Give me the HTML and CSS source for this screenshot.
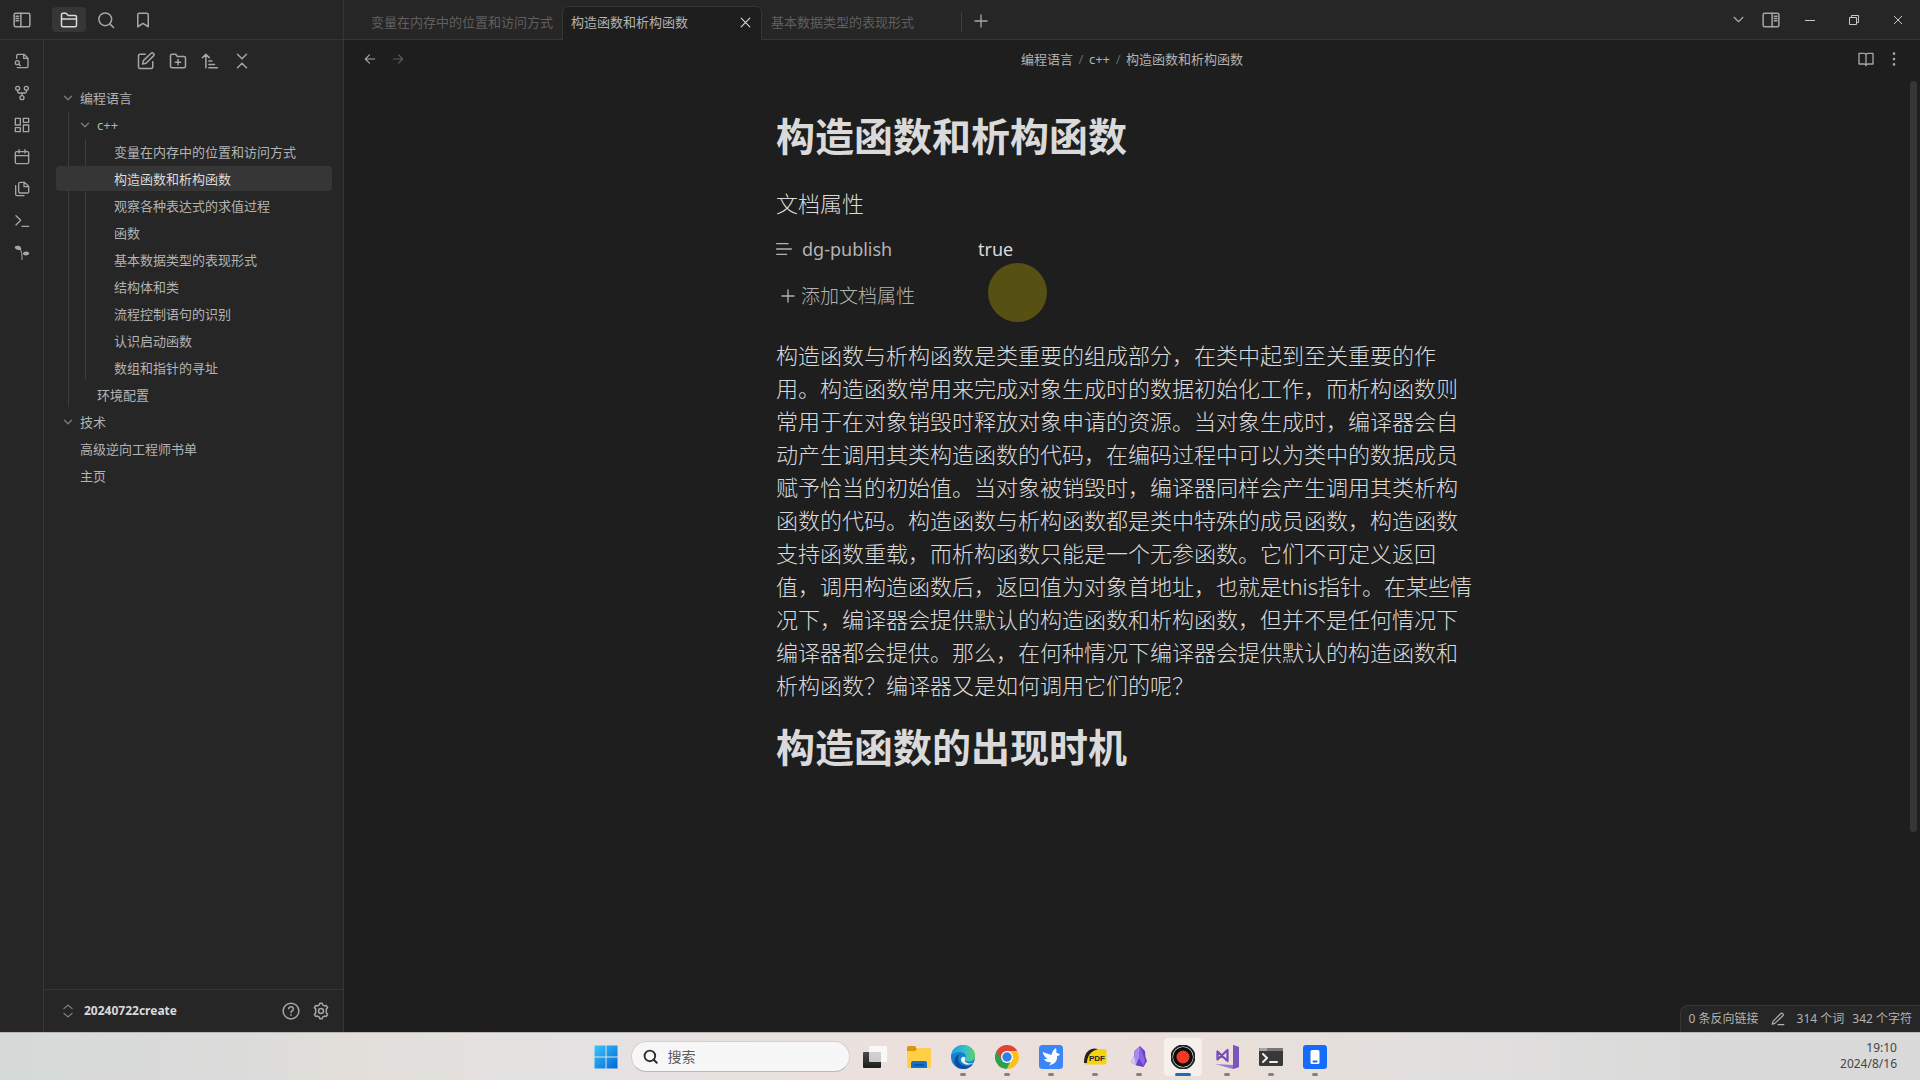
FILE: index.html
```html
<!DOCTYPE html>
<html lang="zh-CN">
<head>
<meta charset="utf-8">
<meta name="viewport" content="width=device-width, initial-scale=1">
<title>构造函数和析构函数</title>
<link rel="stylesheet" href="styles.css">
</head>
<body>
<svg class="sprite" aria-hidden="true">
  <symbol id="i-left" viewBox="0 0 24 24"><rect x="1.500" y="3" width="21" height="18" rx="2"/><path d="M10.500 3v18M4 7h3.500M4 10h3.500M4 13h3.500"/></symbol>
  <symbol id="i-right" viewBox="0 0 24 24"><rect x="1.500" y="3" width="21" height="18" rx="2"/><path d="M13.500 3v18M16.500 7H20M16.500 10H20M16.500 13H20"/></symbol>
  <symbol id="i-folder" viewBox="0 0 24 24"><path d="M22 19a2 2 0 0 1-2 2H4a2 2 0 0 1-2-2V5a2 2 0 0 1 2-2h4l3 3h9a2 2 0 0 1 2 2zM2 10.500h20"/></symbol>
  <symbol id="i-search" viewBox="0 0 24 24"><circle cx="11" cy="11" r="8.500"/><path d="m22 22-4.800-4.800"/></symbol>
  <symbol id="i-bookmark" viewBox="0 0 24 24"><path d="m19 21-7-4.500L5 21V5a2 2 0 0 1 2-2h10a2 2 0 0 1 2 2z"/></symbol>
  <symbol id="i-filesearch" viewBox="0 0 24 24"><path d="M4 8V4a2 2 0 0 1 2-2h9l6 6v12a2 2 0 0 1-2 2H5M14.500 2v6H21"/><circle cx="5" cy="14.500" r="3"/><path d="m7.500 17 2 2"/></symbol>
  <symbol id="i-fork" viewBox="0 0 24 24"><circle cx="12" cy="19" r="3"/><circle cx="5.500" cy="5" r="3"/><circle cx="18.500" cy="5" r="3"/><path d="M18.500 8v2a2 2 0 0 1-2 2h-9a2 2 0 0 1-2-2V8M12 12v4"/></symbol>
  <symbol id="i-grid" viewBox="0 0 24 24"><rect x="2" y="2" width="7.500" height="10"/><rect x="14" y="2" width="8" height="6"/><rect x="14" y="12" width="8" height="10"/><rect x="2" y="16" width="7.500" height="6"/></symbol>
  <symbol id="i-calendar" viewBox="0 0 24 24"><rect x="2" y="4" width="20" height="18" rx="2"/><path d="M7.500 1v5M16.500 1v5M2 10h20"/></symbol>
  <symbol id="i-files" viewBox="0 0 24 24"><path d="M15.500 2H9a2 2 0 0 0-2 2v12a2 2 0 0 0 2 2h11a2 2 0 0 0 2-2V8zM15 2v6.500h7M2.500 7v13a2 2 0 0 0 2 2H15"/></symbol>
  <symbol id="i-terminal" viewBox="0 0 24 24"><path d="m3 18 7-7-7-7M12 20h10"/></symbol>
  <symbol id="i-sprout" viewBox="0 0 24 24"><path d="M2 3c4-2 7-1 8 3C6 7 3 6 2 3zM14 13c2-3 6-3 8-.5-2 3-5 3-8 .5z" fill="currentColor"/><path d="M9 6c3 4 3 9 3 16" stroke-width="1.500"/></symbol>
  <symbol id="i-edit" viewBox="0 0 24 24"><path d="M11 3H4a2 2 0 0 0-2 2v15a2 2 0 0 0 2 2h15a2 2 0 0 0 2-2v-7M18.500 2a2.100 2.100 0 0 1 3.500 3.200L12 15l-4.500 1 1-4.500z"/></symbol>
  <symbol id="i-folderplus" viewBox="0 0 24 24"><path d="M22 19a2 2 0 0 1-2 2H4a2 2 0 0 1-2-2V5a2 2 0 0 1 2-2h5l2 3h9a2 2 0 0 1 2 2zM12 10v7M8.500 13.500h7"/></symbol>
  <symbol id="i-sort" viewBox="0 0 24 24"><path d="M2 7.500 6.500 3 11 7.500M6.500 3v18M10.500 12h4M10.500 16.500h7.500M10.500 21H22"/></symbol>
  <symbol id="i-collapse" viewBox="0 0 24 24"><path d="m6 3 6 6 6-6M6 21l6-6 6 6"/></symbol>
  <symbol id="i-down" viewBox="0 0 24 24"><path d="m5 8.500 7 7 7-7"/></symbol>
  <symbol id="i-updown" viewBox="0 0 24 24"><path d="m5 8 7-6 7 6M5 16l7 6 7-6"/></symbol>
  <symbol id="i-help" viewBox="0 0 24 24"><circle cx="12" cy="12" r="10.500"/><path d="M9 9a3 3 0 0 1 6 .5c0 2-3 2.700-3 4.500M12 17v.6"/></symbol>
  <symbol id="i-gear" viewBox="0 0 24 24"><path d="M9.800 3.800 10.500 1.500h3l.7 2.300 2.500 1.500 2.400-.6 1.700 2.800-1.700 1.900v5.200l1.700 1.900-1.700 2.800-2.400-.6-2.500 1.500-.7 2.300h-3l-.7-2.300-2.500-1.500-2.400.6-1.700-2.800 1.700-1.900V9.400L3.200 7.500l1.700-2.800 2.400.6z"/><circle cx="12" cy="12" r="3.300"/></symbol>
  <symbol id="i-x" viewBox="0 0 24 24"><path d="M4 4l16 16M20 4 4 20"/></symbol>
  <symbol id="i-plus" viewBox="0 0 24 24"><path d="M12 3v18M3 12h18"/></symbol>
  <symbol id="i-back" viewBox="0 0 24 24"><path d="M20 12H4M11 5l-7 7 7 7"/></symbol>
  <symbol id="i-fwd" viewBox="0 0 24 24"><path d="M4 12h16M13 5l7 7-7 7"/></symbol>
  <symbol id="i-book" viewBox="0 0 24 24"><path d="M1.500 3.500H9a3 3 0 0 1 3 2 3 3 0 0 1 3-2h7.500v16H15a3 3 0 0 0-3 2 3 3 0 0 0-3-2H1.500zM12 5v17"/></symbol>
  <symbol id="i-dots" viewBox="0 0 24 24"><path d="M12 4v.1M12 12v.1M12 20v.1"/></symbol>
  <symbol id="i-min" viewBox="0 0 12 12"><path d="M1 6.500h10"/></symbol>
  <symbol id="i-restore" viewBox="0 0 12 12"><path d="M1.500 3.500h7v7h-7zM3.500 3V1.500h7v7H9"/></symbol>
  <symbol id="i-lines" viewBox="0 0 24 24"><path d="M1 4h17M1 12h22M1 20h15"/></symbol>
  <symbol id="i-pen" viewBox="0 0 24 24"><path d="M12 21.500h10M16.500 3a2.500 2.500 0 0 1 3.800 3.500L6.500 19.500 2 21l1.500-5z"/></symbol>
</svg>

<div class="app">
  <aside class="side">
    <header class="side-top">
      <button class="ic toggle" aria-label="折叠侧栏"><svg><use href="#i-left"/></svg></button>
      <nav class="side-tabs">
        <button class="ic tab-ic on" aria-label="文件列表"><svg><use href="#i-folder"/></svg></button>
        <button class="ic tab-ic" aria-label="搜索"><svg><use href="#i-search"/></svg></button>
        <button class="ic tab-ic" aria-label="书签"><svg><use href="#i-bookmark"/></svg></button>
      </nav>
    </header>
    <nav class="ribbon">
      <button class="ic" aria-label="快速切换"><svg><use href="#i-filesearch"/></svg></button>
      <button class="ic" aria-label="关系图谱"><svg><use href="#i-fork"/></svg></button>
      <button class="ic" aria-label="白板"><svg><use href="#i-grid"/></svg></button>
      <button class="ic" aria-label="日记"><svg><use href="#i-calendar"/></svg></button>
      <button class="ic" aria-label="模板"><svg><use href="#i-files"/></svg></button>
      <button class="ic" aria-label="命令面板"><svg><use href="#i-terminal"/></svg></button>
      <button class="ic" aria-label="数字花园"><svg><use href="#i-sprout"/></svg></button>
    </nav>
    <section class="explorer">
      <div class="tools">
        <button class="ic" aria-label="新建笔记"><svg><use href="#i-edit"/></svg></button>
        <button class="ic" aria-label="新建文件夹"><svg><use href="#i-folderplus"/></svg></button>
        <button class="ic" aria-label="排序"><svg><use href="#i-sort"/></svg></button>
        <button class="ic" aria-label="全部折叠"><svg><use href="#i-collapse"/></svg></button>
      </div>
      <ul class="tree">
        <li><a class="row dir" href="#"><svg><use href="#i-down"/></svg>编程语言</a>
          <ul>
            <li><a class="row dir" href="#"><svg><use href="#i-down"/></svg>c++</a>
              <ul>
                <li><a class="row" href="#">变量在内存中的位置和访问方式</a></li>
                <li><a class="row on" href="#">构造函数和析构函数</a></li>
                <li><a class="row" href="#">观察各种表达式的求值过程</a></li>
                <li><a class="row" href="#">函数</a></li>
                <li><a class="row" href="#">基本数据类型的表现形式</a></li>
                <li><a class="row" href="#">结构体和类</a></li>
                <li><a class="row" href="#">流程控制语句的识别</a></li>
                <li><a class="row" href="#">认识启动函数</a></li>
                <li><a class="row" href="#">数组和指针的寻址</a></li>
              </ul>
            </li>
            <li><a class="row" href="#">环境配置</a></li>
          </ul>
        </li>
        <li><a class="row dir" href="#"><svg><use href="#i-down"/></svg>技术</a></li>
        <li><a class="row" href="#">高级逆向工程师书单</a></li>
        <li><a class="row" href="#">主页</a></li>
      </ul>
      <footer class="vault">
        <button class="vault-name"><svg><use href="#i-updown"/></svg>20240722create</button>
        <button class="ic" aria-label="帮助"><svg><use href="#i-help"/></svg></button>
        <button class="ic" aria-label="设置"><svg><use href="#i-gear"/></svg></button>
      </footer>
    </section>
  </aside>

  <main class="main">
    <header class="tabs">
      <a class="tab" href="#"><span>变量在内存中的位置和访问方式</span></a>
      <div class="tab on"><span>构造函数和析构函数</span><button class="ic close" aria-label="关闭"><svg><use href="#i-x"/></svg></button></div>
      <a class="tab last" href="#"><span>基本数据类型的表现形式</span></a>
      <button class="ic add" aria-label="新标签页"><svg><use href="#i-plus"/></svg></button>
      <div class="win">
        <button class="ic list" aria-label="标签列表"><svg><use href="#i-down"/></svg></button>
        <button class="ic rtoggle" aria-label="右侧栏"><svg><use href="#i-right"/></svg></button>
        <button class="ic ctl" aria-label="最小化"><svg><use href="#i-min"/></svg></button>
        <button class="ic ctl" aria-label="还原"><svg><use href="#i-restore"/></svg></button>
        <button class="ic ctl x" aria-label="关闭窗口"><svg><use href="#i-x"/></svg></button>
      </div>
    </header>
    <div class="viewbar">
      <div class="hist">
        <button class="ic" aria-label="后退"><svg><use href="#i-back"/></svg></button>
        <button class="ic dim" aria-label="前进"><svg><use href="#i-fwd"/></svg></button>
      </div>
      <nav class="crumbs"><a href="#">编程语言</a><i>/</i><a href="#">c++</a><i>/</i><span>构造函数和析构函数</span></nav>
      <div class="acts">
        <button class="ic" aria-label="阅读视图"><svg><use href="#i-book"/></svg></button>
        <button class="ic dots" aria-label="更多选项"><svg><use href="#i-dots"/></svg></button>
      </div>
    </div>
    <div class="scroller">
      <article class="note">
        <h1>构造函数和析构函数</h1>
        <h2 class="props-title">文档属性</h2>
        <div class="prop">
          <label for="pub"><svg><use href="#i-lines"/></svg>dg-publish</label>
          <input id="pub" type="text" value="true">
          <span class="pointer"></span>
        </div>
        <button class="addprop"><svg><use href="#i-plus"/></svg>添加文档属性</button>
        <p>构造函数与析构函数是类重要的组成部分，在类中起到至关重要的作用。构造函数常用来完成对象生成时的数据初始化工作，而析构函数则常用于在对象销毁时释放对象申请的资源。当对象生成时，编译器会自动产生调用其类构造函数的代码，在编码过程中可以为类中的数据成员赋予恰当的初始值。当对象被销毁时，编译器同样会产生调用其类析构函数的代码。构造函数与析构函数都是类中特殊的成员函数，构造函数支持函数重载，而析构函数只能是一个无参函数。它们不可定义返回值，调用构造函数后，返回值为对象首地址，也就是this指针。在某些情况下，编译器会提供默认的构造函数和析构函数，但并不是任何情况下编译器都会提供。那么，在何种情况下编译器会提供默认的构造函数和析构函数？编译器又是如何调用它们的呢？</p>
        <h1>构造函数的出现时机</h1>
      </article>
      <div class="track"><div class="thumb"></div></div>
    </div>
    <footer class="status">
      <span>0 条反向链接</span>
      <svg><use href="#i-pen"/></svg>
      <span>314 个词</span>
      <span>342 个字符</span>
    </footer>
  </main>
</div>

<footer class="taskbar">
  <div class="dock">
    <button class="app-ic" aria-label="开始"><svg viewBox="0 0 24 24"><defs><linearGradient id="g-win" x1="0" y1="0" x2="1" y2="1"><stop offset="0" stop-color="#3cc4fb"/><stop offset="1" stop-color="#0067d4"/></linearGradient></defs><path fill="url(#g-win)" d="M.5.500h11v11H.5zM12.500.500h11v11h-11zM.5 12.500h11v11H.5zM12.500 12.500h11v11h-11z"/></svg></button>
    <label class="search"><svg><use href="#i-search"/></svg><input type="text" placeholder="搜索" aria-label="搜索"></label>
    <button class="app-ic" aria-label="任务视图"><svg viewBox="0 0 24 24"><defs><linearGradient id="g-tv" x1="0" y1="0" x2="0" y2="1"><stop offset="0" stop-color="#4a4a4a"/><stop offset="1" stop-color="#1c1c1c"/></linearGradient></defs><rect y="7" width="18" height="16" rx="1" fill="url(#g-tv)"/><rect x="6" y="1" width="18" height="16" rx="1" fill="#fff" opacity=".75"/></svg></button>
    <button class="app-ic" aria-label="文件资源管理器"><svg viewBox="0 0 24 24"><path fill="#d9950f" d="M0 3a2 2 0 0 1 2-2h6l2 3v5H0z"/><path fill="#ffcf45" d="M0 6h8l3-3h11a2 2 0 0 1 2 2v16a2 2 0 0 1-2 2H2a2 2 0 0 1-2-2z"/><path fill="#1570c8" d="M4 23v-5a2 2 0 0 1 2-2h12a2 2 0 0 1 2 2v5z"/><path fill="#0b57a4" d="M7 19h10v2H7z"/></svg></button>
    <button class="app-ic run" aria-label="Edge"><svg viewBox="0 0 24 24"><defs><linearGradient id="g-e1" x1="0" y1="0" x2="1" y2="0"><stop offset="0" stop-color="#1b9de2"/><stop offset=".6" stop-color="#35c1c8"/><stop offset="1" stop-color="#5fd35f"/></linearGradient></defs><circle cx="12" cy="12" r="12" fill="#1680d0"/><path fill="url(#g-e1)" d="M0 11C1 4 6 0 12 0c7 0 12 5 12 10.500 0 4-3 6-6 6-4 0-5-1.500-3.500-3.500C16 9 12 7 9 7 5 7 1 9 0 11z"/><path fill="#0e4f9c" d="M9 9c-4 5-1 11 5 12 3 .5 6-.5 8-2-4 6-12 6.500-17 2C2 17 3 11 9 9z"/><path fill="#e9f4f8" d="M14.500 13c-2-3-6 0-4 3.500 2 3.500 8 4.500 12 1-2 1-4 1.500-6 .5-3-.5-3-3-2-5z"/></svg></button>
    <button class="app-ic run" aria-label="Chrome"><svg viewBox="0 0 24 24"><path fill="#30a04f" d="M12 24A12 12 0 0 1 1.600 6L12 12l4 3z"/><path fill="#e24234" d="M1.600 6A12 12 0 0 1 22.400 6L12 6.500 7 15z"/><path fill="#fbc116" d="M22.600 6.500H12L17 15l-5 9A12 12 0 0 0 22.600 6.500z"/><circle cx="12" cy="12" r="6" fill="#fff"/><circle cx="12" cy="12" r="4.700" fill="#327fe8"/></svg></button>
    <button class="app-ic run" aria-label="飞鸟"><svg viewBox="0 0 24 24"><rect width="24" height="24" rx="3.500" fill="#3d86f8"/><path fill="#fff" d="M3.500 7l9 3c.5-3 2-5.500 4.500-7 .5 2 .5 3.500.3 5C19 8 20 8.500 21 10l-3 1c.5 5-2 8-8 9.500 1-1 1.600-2 2-3.200-3.500.3-5.500-.8-7-3l3.500-.3C6 12 4.500 10 3.500 7z"/></svg></button>
    <button class="app-ic run" aria-label="PDF"><svg viewBox="0 0 24 24"><path fill="#f5d40a" d="M2 19.500C1 11 4 4.500 12 4h9.500a2 2 0 0 1 2 2v11.500a2 2 0 0 1-2 2z"/><path fill="#222" d="M1 18C1 9 5 4 11 3.500l4 .5C8 6 4 11 4 18z"/><path fill="#f5d40a" d="M5 18c0-5 1-8 4-11L7 17z"/><text x="6" y="16" class="pdf">PDF</text></svg></button>
    <button class="app-ic run" aria-label="Obsidian"><svg viewBox="0 0 24 24"><path fill="#6c3fc9" d="M13 1l5 5 .5 6L20 16l-3.500 6-7-1.500L4 17l3-6 .5-5z"/><path fill="#a88bf2" d="M13 1 8 6l-1 5-3 6 5 3 3-7z"/><path fill="#8c64e4" d="M13 1l-1 12 4.500 8 1.500-6z"/><path fill="#d6c6fb" d="m7 11-3 6 5 3z"/></svg></button>
    <button class="app-ic run on" aria-label="录屏"><svg viewBox="0 0 24 24"><circle cx="12" cy="12" r="11.500" fill="#fff" stroke="#222"/><circle cx="12" cy="12" r="10" fill="#090909"/><circle cx="12" cy="12" r="6.500" fill="#f03826"/></svg></button>
    <button class="app-ic run" aria-label="Visual Studio"><svg viewBox="0 0 24 24"><path fill="#9b78d2" d="M18 0l6 2v20l-6 2-18-5 18 1z"/><path fill="#7c55bd" d="M18 0l6 2v20l-6 2z"/><path fill="none" stroke="#7650b8" stroke-width="2.300" stroke-linejoin="round" d="M2.500 6.500v8L12.500 5v11z"/></svg></button>
    <button class="app-ic run" aria-label="终端"><svg viewBox="0 0 24 24"><rect y="3" width="24" height="18" rx="1.500" fill="#383838"/><path fill="#777" d="M1.500 3h21A1.500 1.500 0 0 1 24 4.500V6H0V4.500A1.500 1.500 0 0 1 1.500 3z"/><path fill="#a5a5a5" d="M1 3h7v3H0z"/><path fill="none" stroke="#eee" stroke-width="2" d="m4 9 4 4-4 4M11 17h7"/></svg></button>
    <button class="app-ic run" aria-label="手机"><svg viewBox="0 0 24 24"><rect width="24" height="24" rx="3" fill="#166bfa"/><rect x="7.500" y="5" width="9" height="14" rx="1.500" fill="#fff"/><path stroke="#166bfa" d="M10.500 16.500h3"/></svg></button>
  </div>
  <div class="clock"><time>19:10</time><time>2024/8/16</time></div>
</footer>
</body>
</html>
```
FILE: styles.css
```css
:root {
  --bg: #1e1e1e;
  --bg2: #262626;
  --line: #363636;
  --text: #dadada;
  --muted: #b3b3b3;
  --faint: #666;
}
* { box-sizing: border-box; }
body {
  margin: 0;
  height: 100vh;
  display: flex;
  flex-direction: column;
  overflow: hidden;
  background: var(--bg);
  color: var(--text);
  font: 13px/18px "Noto Sans", "Noto Sans CJK SC", sans-serif;
}
button, input { font: inherit; color: inherit; background: none; border: 0; padding: 0; margin: 0; }
a { color: inherit; text-decoration: none; }
ul { list-style: none; margin: 0; padding: 0; }
.sprite { position: absolute; width: 0; height: 0; }
svg { display: block; flex: none; fill: none; stroke: currentColor; stroke-width: 2; stroke-linecap: round; stroke-linejoin: round; }
.ic { display: flex; align-items: center; justify-content: center; flex: none; color: #a6a6a6; }
.ic svg { width: 18px; height: 18px; }

.app { flex: 1; min-height: 0; display: flex; }

/* sidebar */
.side {
  width: 344px;
  flex: none;
  display: grid;
  grid-template: 40px 1fr / 44px 1fr;
  background: var(--bg2);
  border-right: 1px solid var(--line);
}
.side-top { grid-column: 1 / 3; display: flex; align-items: center; border-bottom: 1px solid var(--line); }
.toggle { width: 44px; }
.side-tabs { display: flex; gap: 3px; padding-left: 8px; }
.tab-ic { width: 34px; height: 25px; border-radius: 4px; }
.tab-ic.on { background: #363636; color: var(--text); }
.ribbon { display: flex; flex-direction: column; gap: 8px; padding-top: 9px; border-right: 1px solid var(--line); }
.ribbon .ic { height: 24px; }
.ribbon svg { width: 16px; height: 16px; }
.explorer { display: flex; flex-direction: column; min-height: 0; }
.tools { display: flex; justify-content: center; gap: 6px; padding: 8px 0 11px; }
.tools .ic { width: 26px; height: 26px; }
.tree { flex: 1; padding: 0 11px 0 12px; }
.row { display: flex; align-items: center; height: 25px; margin-bottom: 2px; border-radius: 4px; padding-left: 24px; color: var(--muted); }
.row.dir { padding-left: 6px; gap: 6px; }
.row svg { width: 12px; height: 12px; color: #777; stroke-width: 3; }
.tree ul { border-left: 1px solid #3d3d3d; margin-left: 12px; }
.tree ul .row { padding-left: 28px; }
.tree ul .row.dir { padding-left: 10px; }
.tree ul ul { margin-left: 16px; }
.tree ul .row.on { background: #363636; color: var(--text); margin-left: -30px; padding-left: 58px; }
.vault { height: 43px; border-top: 1px solid var(--line); display: flex; align-items: center; gap: 12px; padding: 0 13px 0 18px; }
.vault-name { flex: 1; display: flex; align-items: center; gap: 10px; font-size: 12px; font-weight: 700; }
.vault-name svg { width: 14px; height: 14px; margin-left: -1px; margin-right: -1px; color: #888; }

/* tabs */
.main { flex: 1; min-width: 0; display: flex; flex-direction: column; position: relative; }
.tabs { height: 40px; flex: none; display: flex; align-items: flex-end; padding-left: 18px; background: var(--bg2); border-bottom: 1px solid var(--line); }
.tab { width: 200px; height: 33px; display: flex; align-items: center; padding: 0 9px 2px; color: #606060; white-space: nowrap; }
.tab span { flex: 1; min-width: 0; overflow: hidden; }
.tab.on { height: 34px; margin-bottom: -1px; position: relative; background: var(--bg); color: var(--muted); border: 1px solid var(--line); border-bottom: 0; border-radius: 6px 6px 0 0; padding: 0 8px 3px; }
.close { width: 16px; color: var(--text); }
.close svg { width: 13px; height: 13px; }
.tab.last { position: relative; }
.tab.last::after { content: ""; position: absolute; right: 0; top: 6px; width: 1px; height: 20px; background: #404040; }
.add { width: 38px; height: 36px; }
.add svg { width: 16px; height: 16px; }
.win { margin-left: auto; height: 39px; display: flex; align-items: center; }
.list { width: 32px; }
.list svg { width: 15px; height: 15px; }
.rtoggle { width: 34px; }
.ctl { width: 44px; color: #c8c8c8; }
.ctl svg { width: 12px; height: 12px; stroke-width: 1; stroke-linecap: butt; stroke-linejoin: miter; }
.ctl.x svg { stroke-width: 2; }

/* view header */
.viewbar { height: 38px; flex: none; display: grid; grid-template-columns: 1fr auto 1fr; align-items: center; padding: 0 16px; }
.hist, .acts { display: flex; gap: 8px; }
.hist .ic, .acts .ic { width: 20px; height: 24px; }
.hist svg { width: 14px; height: 14px; }
.hist .dim { color: #5c5c5c; }
.acts { justify-content: flex-end; }
.acts svg { width: 16px; height: 16px; }
.acts .dots svg { stroke-width: 4; }
.crumbs { display: flex; color: var(--muted); }
.crumbs i { font-style: normal; width: 16px; text-align: center; color: var(--faint); }

/* note */
.scroller { flex: 1; min-height: 0; display: flex; }
.note { flex: 1; max-width: 700px; margin: 0 auto; padding-top: 35px; font-size: 22px; line-height: 33px; }
.note h1 { margin: 0; font-size: 39px; line-height: 46px; font-weight: 700; }
.props-title { margin: 27px 0 13px; font-size: 22px; line-height: 34px; font-weight: 300; }
.prop { display: flex; align-items: center; height: 32px; font-size: 18px; position: relative; }
.prop label { width: 202px; display: flex; align-items: center; gap: 10px; color: var(--muted); }
.prop svg { width: 16px; height: 16px; }
.prop input { flex: 1; min-width: 0; height: 32px; }
.pointer { position: absolute; left: 212px; top: 30px; width: 59px; height: 59px; border-radius: 50%; background: #565013; }
.addprop { display: flex; align-items: center; gap: 5px; height: 32px; margin: 15px 0 27px; padding-left: 4px; font-size: 19px; font-weight: 300; color: var(--muted); }
.addprop svg { width: 16px; height: 16px; }
.note p { margin: 0 0 22px; font-weight: 300; }
.track { width: 12px; padding-top: 3px; }
.thumb { width: 7px; height: 79%; margin-left: 2px; border-radius: 4px; background: #363636; }

.status { position: absolute; right: 0; bottom: 0; height: 27px; display: flex; align-items: center; padding: 0 8px; background: var(--bg2); border: solid var(--line); border-width: 1px 0 0 1px; border-radius: 8px 0 0 0; color: var(--muted); gap: 8px; font-size: 12px; }
.status svg { width: 14px; height: 14px; margin: 0 4px; }

/* taskbar */
.taskbar {
  height: 48px;
  flex: none;
  display: grid;
  grid-template-columns: 1fr auto 1fr;
  align-items: center;
  border-top: 1px solid #b9b7b6;
  background: linear-gradient(90deg, #d5dad8 0, #dbdbda 12%, #e2dfdb 18%, #e4e2e2 30%, #ece0dc 48%, #eadfd9 64%, #e2e0df 74%, #d9d9d9 90%);
  color: #454545;
}
.dock { grid-column: 2; display: flex; align-items: center; }
.app-ic { width: 44px; height: 46px; display: flex; align-items: center; justify-content: center; position: relative; }
.app-ic svg { width: 24px; height: 24px; stroke: none; }
.app-ic.run::after { content: ""; position: absolute; left: 19px; top: 39px; width: 6px; height: 3px; border-radius: 2px; background: #85807d; }
.app-ic.on::before { content: ""; position: absolute; inset: 4px 3px; background: #f6f0ed; border-radius: 4px; }
.app-ic.on svg { position: relative; }
.app-ic.on::after { left: 14px; width: 16px; background: #176fb8; }
.pdf { font: 700 8px "Liberation Sans", sans-serif; fill: #222; }
.search { width: 219px; height: 31px; margin: 0 3px; padding: 0 11px; display: flex; align-items: center; gap: 10px; border-radius: 16px; background: #f8f7f7; border: 1px solid #d4d0cf; border-bottom-color: #bdb9b8; font-size: 14px; }
.search svg { width: 15px; height: 15px; stroke-width: 3; color: #2c2c2c; }
.search input { min-width: 0; flex: 1; }
.search input::placeholder { color: #5c5c5c; opacity: 1; }
.clock { grid-column: 3; justify-self: end; padding: 0 23px 2px 0; display: flex; flex-direction: column; text-align: right; font-size: 12px; line-height: 16px; }
```
